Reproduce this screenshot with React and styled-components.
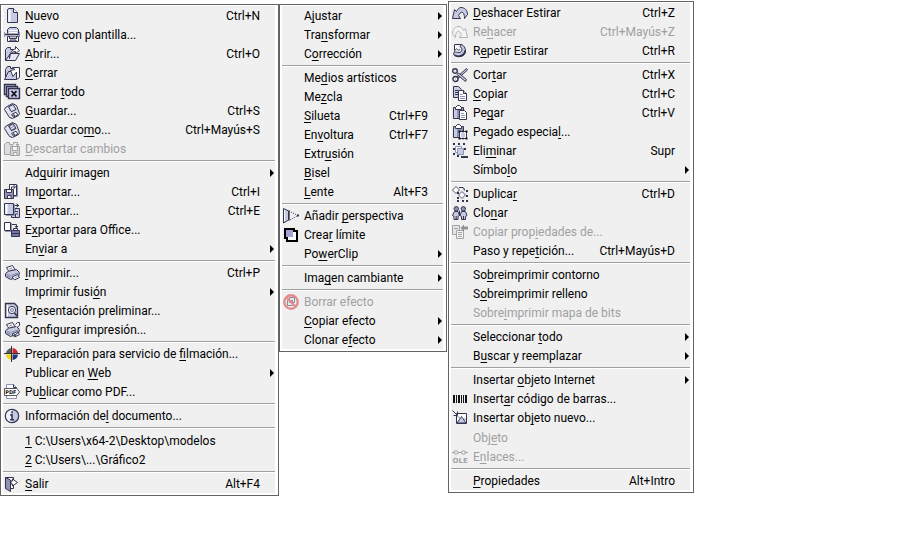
import React from "react";
import styled, { createGlobalStyle } from "styled-components";

const GlobalStyle = createGlobalStyle`
  body {
    margin: 0;
    background: #fff;
  }
`;

const Desk = styled.main`
  display: flex;
  align-items: flex-start;
  padding-top: 1px;
  font-family: Roboto, "Open Sans", sans-serif;
  font-size: 12px;
  color: #000;
`;

const Panel = styled.nav`
  box-sizing: border-box;
  flex: 0 0 auto;
  min-width: ${(p) => p.$min}px;
  margin-top: ${(p) => (p.$raised ? 0 : 3)}px;
  margin-left: ${(p) => (p.$spaced ? 1 : 0)}px;
  border: 1px solid #646464;
  padding: 1px 3px 2px 2px;
  background: #f0f0f0;
  box-shadow: inset 0 0 0 1px #fff, inset 2px 0 0 #fff, inset -3px 0 0 #fff, inset 0 -2px 0 #fff;
`;

const Group = styled.ul`
  list-style: none;
  margin: 0;
  padding: 0;

  & + & {
    margin-top: 2px;
    border-top: 1px solid #a0a0a0;
    box-shadow: inset 0 1px 0 #fff;
    padding-top: 2px;
  }
`;

const Item = styled.button`
  display: grid;
  grid-template-columns: 16px 1fr auto 14px;
  align-items: center;
  width: 100%;
  height: ${(p) => (p.$tall ? 20 : 19)}px;
  padding: ${(p) => (p.$tall ? 1 : 0)}px 1px 0;
  border: 0;
  background: none;
  color: inherit;
  font: inherit;
  line-height: 16px;
  text-align: left;
  white-space: nowrap;

  &:disabled {
    color: #a0a0a0;
  }
`;

const Label = styled.span`
  padding: 1px 0 0 5px;
`;

const Mnemonic = styled.u`
  text-decoration-skip-ink: none;
  text-underline-offset: 2px;
  text-decoration-thickness: 1px;
`;

const Shortcut = styled.kbd`
  font: inherit;
  padding: 1px 0 0 14px;
`;

const Arrow = styled.svg`
  width: 4px;
  height: 8px;
  justify-self: end;
`;

const IconBox = styled.svg`
  display: block;
  width: 16px;
  height: 16px;
  overflow: visible;
  fill: none;
  stroke: #34344e;
  stroke-width: 1;
`;

const IconText = styled.text`
  font-family: "DejaVu Sans", sans-serif;
  font-weight: bold;
  font-size: ${(p) => p.$size}px;
  stroke: none;
  fill: ${(p) => p.$color};
`;

const L = "#c6cae2";
const M = "#8e92b5";
const G = "#a3a3a7";

const Floppy = ({ shutter = L }) => (
  <>
    <path d="M1.5 4.5 8.5.5 12.5 2.5 15.5 10.5 14.5 12.5 8.5 15.5 5.5 14.5.5 6.5z" fill="#dfe1f0" />
    <path d="M4.5 3.8 9 1.5 12 6.5 7.5 8.8z" fill={shutter} />
    <path d="M6.2 5 9.4 3.4M7.2 6.8 10.4 5.2" stroke="#fff" />
    <path d="M7.5 11.5 12 9.2 13.8 12 9.5 14.2z" fill="#fff" />
    <path d="M9.4 11.4l1.2 1.8" strokeWidth="1.4" />
  </>
);

const Printer = () => (
  <>
    <path d="M2.5 2.5 8.5.5 11.5 5.5 5.5 7.5z" fill="#fff" />
    <path d="M5 4 8.2 3M6 5.6 9.2 4.6" stroke={M} />
    <path d="M1.5 8.5 4.5 6.2 12.5 4.5 15.5 7.5 14.5 11.5 6.5 14.5 1.5 11.5z" fill={L} />
    <path d="M1.5 8.5 6.5 10.5 15.5 7.5" stroke={M} />
    <path d="M2.5 9.8v1.5l4 2.2v-2z" fill={M} stroke="none" />
    <path d="M8 12 13.5 9.5 15.5 12.5 10.5 15z" fill="#fff" />
    <path d="M10.6 13 13.4 11.6" stroke={M} />
  </>
);

const Clipboard = () => (
  <>
    <path d="M1.5 2.5H11.5V13.5H1.5z" fill={M} />
    <path d="M2 3h3v10H2z" fill={L} stroke="none" />
    <path d="M3.5 4.5V2.5L5.5.5H7.5L9.5 2.5V4.5z" fill="#fff" />
  </>
);

const icons = {
  new: (
    <>
      <path d="M3.5 1.5 5 .5H9.5L13.5 4.5V14.5H3.5z" fill={L} />
      <path d="M5.5 2v12" stroke="#fff" strokeWidth="2" />
      <path d="M9.5.5V4.5H13.5" fill="#fff" />
    </>
  ),
  template: (
    <>
      <path d="M3.5 6.5V2.5L5.5.5H12.5L14.5 2.5V6.5" fill={L} />
      <path d="M5 3.5H13M5 5.5H13" stroke="#fff" />
      <path d="M0 7.5H16" strokeWidth="1.6" />
      <path d="M.5 5v5M15.5 5v5" stroke={M} />
      <path d="M3.5 9.5H14.5V14.5H3.5z" fill="#fff" />
      <path d="M5.5 9.5V11.5H12.5V9.5M6 14V13H12V14" fill={L} />
    </>
  ),
  open: (
    <>
      <path d="M1.5 14.5V3.5L3.5 1.5H6.5V3.5H10.5V6.5" fill={L} />
      <path d="M1.5 14.5 6.5 7.5H15.5L11.5 14.5z" fill="#e4e6f3" />
      <path d="M5.5 12.5C5.5 8 8 5.5 11.5 5.5V7.5L15.5 4.5 11.5 .5V3C8 3.5 5.5 7 5.5 12.5z" fill="#fff" />
    </>
  ),
  close: (
    <>
      <path d="M1.5 14.5V4.5L3.5 1.5H6.5V3.5H9" fill={L} />
      <path d="M.5 14.5 4.5 6.5H13.5L12.5 14.5z" fill={L} />
      <path d="M8.5 2.5H15.5V12.5L12.5 14.5V7L9 11.5 6.5 5.5 11 4.5z" fill="#fff" />
    </>
  ),
  closeAll: (
    <>
      <path d="M.5 .5H11.5V10.5H.5z" fill={L} strokeWidth="1.4" />
      <path d="M2.5 2.5H13.5V12.5H2.5z" fill={L} strokeWidth="1.4" />
      <path d="M4.5 4.5H15.5V14.5H4.5z" fill={L} strokeWidth="1.4" />
      <path d="M7.5 7 12.5 12.5M12.5 7 7.5 12.5" stroke="#11111f" strokeWidth="1.8" />
    </>
  ),
  save: <Floppy />,
  saveAs: <Floppy shutter={M} />,
  revert: (
    <g stroke={G}>
      <path d="M.5 13.5V3.5L2.5 1.5H5.5V3.5H8.5V13.5z" fill="#dedee0" />
      <path d="M6.5 5.5H15.5V14.5H6.5z" fill="#d4d4d6" />
      <path d="M8.5 6V9.5H13.5V6M9.5 14V11.5H13V14" fill="#f5f5f5" />
      <path d="M9.5 3.5V1.5H13.5V4M12 3l1.5 2L15 3" />
    </g>
  ),
  import: (
    <>
      <path d="M5.5 .5H12.5V11.5H5.5z" fill="#fff" />
      <path d="M13.5 1V12.5H8" stroke={M} />
      <path d="M.5 5.5H9.5V14.5H.5z" fill={M} />
      <path d="M2.5 6V8.5H7.5V6M3.5 14V11.5H7V14" fill="#fff" />
      <path d="M7.5 5V3H11M9.5 1 11.5 3 9.5 5" />
    </>
  ),
  export: (
    <>
      <path d="M7.5 5.5H15.5V14.5H7.5z" fill={L} />
      <path d="M11 6v2.5H14M11.5 14v-3H14" fill="#fff" />
      <path d="M.5 .5H9.5V11.5H.5z" fill={L} />
      <path d="M2.5 1v10" stroke="#fff" strokeWidth="2" />
      <path d="M10.5 1V12.5H2" stroke={M} />
      <path d="M11 2.5H14.5M12.5 .8 14.8 2.5 12.5 4.2" />
    </>
  ),
  office: (
    <>
      <path d="M.5 .5H6.5V8.5H.5z" fill="#fff" />
      <path d="M7.5 1V9.5H1" stroke={M} />
      <path d="M8 2.5H12.5V5M11 4l1.5 1.8L14 4" />
      <path d="M9.5 8V6.5H13.5V8" />
      <path d="M7.5 8.5H15.5V14.5H7.5z" fill="#7479a8" />
      <path d="M8 11.5H15" />
    </>
  ),
  print: <Printer />,
  preview: (
    <>
      <path d="M1.5 .5H10.5L13.5 3.5V14.5H1.5z" fill={L} strokeWidth="1.3" />
      <path d="M3.5 2V13.5" stroke="#fff" />
      <circle cx="8" cy="7" r="3.6" fill="#fff" />
      <circle cx="8" cy="7" r="1.6" fill={L} stroke={M} />
      <path d="M10.5 10 13 13" strokeWidth="1.6" />
    </>
  ),
  printSetup: (
    <>
      <Printer />
      <path d="M11.5 2.5 13.5 .5H15.5V3.5L13 5.5" fill="#fff" />
      <path d="M10 14 14.5 10M9 11l3 3.5" />
    </>
  ),
  separations: (
    <g stroke="none">
      <path d="M7.5 2A5.8 5.8 0 0 0 2 7.5H7.5z" fill="#5b5b66" />
      <path d="M8.5 2A5.8 5.8 0 0 1 14 7.5H8.5z" fill="#d4232c" />
      <path d="M2 8.5A5.8 5.8 0 0 0 7.5 14V8.5z" fill="#f2d51b" />
      <path d="M8.5 14A5.8 5.8 0 0 0 14 8.5H8.5z" fill="#24337d" />
      <path d="M7.5 0V16M0 7.5H16" stroke="#333" strokeWidth="1" />
    </g>
  ),
  pdf: (
    <>
      <path d="M2.5 4V.5H9.5L12.5 3.5V5M2.5 11V14.5H12.5V11" fill="#fff" stroke={M} />
      <path d="M9.5 .5V3.5H12.5" />
      <path d="M.5 4.5H13L15.5 8 13 11.5H.5z" fill="#fff" stroke="#555" />
      <IconText x="1.3" y="10" $size={5} $color="#111">PDF</IconText>
    </>
  ),
  info: (
    <>
      <circle cx="8" cy="8" r="6.7" fill={L} strokeWidth="1.2" />
      <path d="M8 2A6 6 0 0 0 8 14z" fill="#eef0fa" stroke="none" />
      <path d="M8 3.2V5.2M6.3 6.9H8V11.5M6 11.8H10.2" strokeWidth="1.6" />
    </>
  ),
  exit: (
    <>
      <path d="M1.5 1.5H9.5V12.5H1.5z" fill="#fff" />
      <path d="M1.5 1.5 6.5 4V15.5L1.5 12.5z" fill={M} />
      <path d="M8.5 5V3L13.5 6.5 8.5 10V8H7V5z" fill="#fff" />
    </>
  ),
  perspective: (
    <>
      <path d="M.5 .5 5.5 3V12L.5 15z" fill={L} />
      <path d="M1.5 2v11" stroke="#fff" />
      <path d="M6 2.5V12.5" strokeWidth="1.4" />
      <path d="M6 3 15 7.5 6 12.5" strokeDasharray="1 1.3" />
      <path d="M14 7.5h2" strokeWidth="2" />
    </>
  ),
  boundary: (
    <>
      <path d="M2 2H11V4H14V14H4V11H2z" fill="#fff" stroke="#000" strokeWidth="2" />
      <path d="M3 3H10V10H3z" fill="#a6a6d6" stroke="none" />
    </>
  ),
  clearEffect: (
    <>
      <path d="M4.5 6.5H9.5V11.5H4.5zM6.5 3.5H11.5V8.5H6.5z" fill="#e6e6ee" stroke="#88889a" />
      <circle cx="8" cy="8" r="6.7" stroke="#e58b8b" strokeWidth="2.4" />
      <path d="M3.3 3.3 12.7 12.7" stroke="#e58b8b" strokeWidth="2.2" />
    </>
  ),
  undo: (
    <path
      d="M2.5 4.5.5 13.5H8.5L6.5 10.5 8.5 7.5C11 6.5 12.5 8.5 12.5 13.5L15.5 9.5C15.5 5 12.5 2.5 9 2.5 7 2.5 6 4 4.5 6.5z"
      fill={L}
    />
  ),
  redo: (
    <path
      d="M13.5 4.5 15.5 13.5H7.5L9.5 10.5 7.5 7.5C5 6.5 3.5 8.5 3.5 13.5L.5 9.5C.5 5 3.5 2.5 7 2.5 9 2.5 10 4 11.5 6.5z"
      fill="#f5f5f6"
      stroke="#b3b3b6"
    />
  ),
  repeat: (
    <>
      <path d="M2.5 1.5H9.5L8 3.5C11 5 10.5 9.5 7 9.5 5 9.5 4 9 2.5 8.5L1.5 11.5C6 15 13.5 14 13.5 8 13.5 5 12 2.5 9.5 1.5" fill={L} />
      <path d="M2.5 1.5V7.5L4.5 5.8C5.5 7 7 7.5 8 6.5" fill="#fff" />
      <path d="M2.5 12.3C7 14.6 12.8 12.5 13 7.5" strokeWidth="1.8" />
    </>
  ),
  cut: (
    <>
      <path d="M14.5 1.5 5.5 9.5 6.5 11 15.5 3z" fill={L} />
      <path d="M6.5 6 14.5 12.5 13.5 14.5 5 7.5z" fill={L} />
      <circle cx="3" cy="4" r="2.3" fill="#fff" strokeWidth="1.4" />
      <circle cx="3.5" cy="12" r="2.5" fill="#fff" strokeWidth="1.4" />
      <path d="M3 3.5v1M3.5 11.5v1" stroke={M} />
    </>
  ),
  copy: (
    <>
      <path d="M1.5 .5H6.5L9.5 3.5V11.5H1.5z" fill={L} />
      <path d="M3 4.5H6M3 6.5H6M3 8.5H6" />
      <path d="M6.5 4.5H11.5L14.5 7.5V14.5H6.5z" fill="#fff" />
      <path d="M11.5 4.5V7.5H14.5" fill={L} />
      <path d="M8 8.5H10.5M8 10.5H13M8 12.5H13" stroke={M} />
    </>
  ),
  paste: (
    <>
      <Clipboard />
      <path d="M7.5 5.5H12.5L14.5 7.5V14.5H7.5z" fill="#fff" />
      <path d="M9 8.5H12M9 10.5H13M9 12.5H13" stroke={M} />
    </>
  ),
  pasteSpecial: (
    <>
      <Clipboard />
      <path d="M7.5 7.5H14.5V14.5H7.5z" fill="#fff" />
      <path d="M9 9H13V13H9z" fill={L} stroke="none" />
      <path d="M6.5 7.5h2M10.5 7.5h1M13.5 7.5H15.5M6.5 14.5h2M10.5 14.5h1M13.5 14.5H15.5" strokeWidth="2" stroke="#11111f" />
    </>
  ),
  remove: (
    <>
      <path d="M3.5 3.5H9.5V9.5H3.5z" fill="#fff" stroke={M} />
      <path d="M5.5 5.5H11.5V11.5H5.5z" fill={L} stroke={M} />
      <path d="M1 1H3M6 1H8M11 1H13M1 6H3M12 6H14M1 11H3M5 13H7" strokeWidth="2" />
      <path d="M9 14H16" strokeWidth="2" />
    </>
  ),
  duplicate: (
    <>
      <path d="M.5 4 4 .5 7.5 4 4 7.5z" fill="#fff" stroke="#50536f" />
      <path d="M7 1.5H10.5C12 2 12.5 3 12.5 4.5" strokeWidth="1.2" />
      <path d="M6.5 9 10 5.5 13.5 9 10 12.5z" fill="#fff" stroke="#50536f" />
      <path d="M5 7H7M14 5H16M14 10H16M5 12H7M5 15H7M10 15H12M14 15H16" strokeWidth="2" />
    </>
  ),
  clone: (
    <>
      <path d="M2.5 6.5.5 10.5 2 11.5V14.5H6V11.5L7.5 10.5 6 6.5z" fill={L} />
      <path d="M9.5 6.5 8 10.5 9.5 11.5V14.5H13.5V11.5L15 10.5 13.5 6.5z" fill={L} />
      <circle cx="4.3" cy="3.8" r="2.2" fill={M} />
      <circle cx="11.3" cy="3.8" r="2.2" fill={M} />
      <path d="M4.2 11V14M11.5 11V14M7.5 5.5V11" />
    </>
  ),
  copyProps: (
    <g stroke={G}>
      <path d="M.5 1.5H7.5V10.5H.5z" fill="#e4e4e6" />
      <path d="M4.5 6.5H11.5V14.5H4.5z" fill="#f4f4f4" />
      <path d="M2 4.5H6M6 8.5H10M6 10.5H10M6 12.5H10" />
      <path d="M8.5 4 12 .5V2.5H16V5.5H12V7.5z" fill="#929297" stroke="none" />
    </g>
  ),
  barcode: (
    <path d="M1 4h2v8h-2zM4 4h1v8h-1zM6 4h2v8h-2zM9 4h1v8h-1zM11 4h1v8h-1zM13 4h2v8h-2z" fill="#111" stroke="none" />
  ),
  insertObject: (
    <>
      <path d="M4.5 3.5H14.5V13.5H4.5z" fill="#fff" />
      <path d="M5 13 9.5 6.5 14 13z" fill={L} />
      <path d="M5 6.5 14 9.5" stroke={M} />
      <path d="M.5 .5 5 5M5.5 1.5V5.5H1.5" />
    </>
  ),
  ole: (
    <>
      <path d="M0 3.5H3M5.5 3.5H10M12.5 3.5H16" stroke={G} />
      <ellipse cx="4" cy="3.5" rx="2.2" ry="1.7" stroke={G} />
      <ellipse cx="11.5" cy="3.5" rx="2.2" ry="1.7" stroke={G} />
      <IconText x="0.5" y="14" $size={7} $color={G}>OLE</IconText>
    </>
  ),
};

// Each item: label with "_" before its access key, then optional icon, shortcut and flags.
const fileMenu = [
  [
    { t: "_Nuevo", icon: "new", key: "Ctrl+N" },
    { t: "N_uevo con plantilla...", icon: "template" },
    { t: "_Abrir...", icon: "open", key: "Ctrl+O" },
    { t: "_Cerrar", icon: "close" },
    { t: "Cerrar _todo", icon: "closeAll" },
    { t: "_Guardar...", icon: "save", key: "Ctrl+S" },
    { t: "Guardar co_mo...", icon: "saveAs", key: "Ctrl+Mayús+S" },
    { t: "_Descartar cambios", icon: "revert", off: true },
  ],
  [
    { t: "Ad_quirir imagen", sub: true },
    { t: "Im_portar...", icon: "import", key: "Ctrl+I" },
    { t: "_Exportar...", icon: "export", key: "Ctrl+E" },
    { t: "E_xportar para Office...", icon: "office" },
    { t: "En_viar a", sub: true },
  ],
  [
    { t: "_Imprimir...", icon: "print", key: "Ctrl+P" },
    { t: "Imprimir fusi_ón", sub: true },
    { t: "P_resentación preliminar...", icon: "preview" },
    { t: "C_onfigurar impresión...", icon: "printSetup" },
  ],
  [
    { t: "Preparación para servicio de _filmación...", icon: "separations" },
    { t: "Publicar en _Web", sub: true },
    { t: "Pu_blicar como PDF...", icon: "pdf" },
  ],
  [{ t: "Información de_l documento...", icon: "info" }],
  [{ t: "_1 C:\\Users\\x64-2\\Desktop\\modelos", tall: true }, { t: "_2 C:\\Users\\...\\Gráfico2" }],
  [{ t: "_Salir", icon: "exit", key: "Alt+F4" }],
];

const effectsMenu = [
  [
    { t: "A_justar", sub: true },
    { t: "Tra_nsformar", sub: true },
    { t: "C_orrección", sub: true },
  ],
  [
    { t: "Me_dios artísticos" },
    { t: "Me_zcla" },
    { t: "_Silueta", key: "Ctrl+F9" },
    { t: "En_voltura", key: "Ctrl+F7" },
    { t: "Extr_usión" },
    { t: "_Bisel" },
    { t: "_Lente", key: "Alt+F3" },
  ],
  [
    { t: "Añadir _perspectiva", icon: "perspective" },
    { t: "Crea_r límite", icon: "boundary" },
    { t: "Po_werClip", sub: true },
  ],
  [{ t: "Ima_gen cambiante", sub: true }],
  [
    { t: "Borrar efecto", icon: "clearEffect", off: true },
    { t: "_Copiar efecto", sub: true },
    { t: "Clonar e_fecto", sub: true },
  ],
];

const editMenu = [
  [
    { t: "_Deshacer Estirar", icon: "undo", key: "Ctrl+Z" },
    { t: "Re_hacer", icon: "redo", key: "Ctrl+Mayús+Z", off: true },
    { t: "R_epetir Estirar", icon: "repeat", key: "Ctrl+R" },
  ],
  [
    { t: "Cor_tar", icon: "cut", key: "Ctrl+X" },
    { t: "_Copiar", icon: "copy", key: "Ctrl+C" },
    { t: "Pe_gar", icon: "paste", key: "Ctrl+V" },
    { t: "Pegado especia_l...", icon: "pasteSpecial" },
    { t: "Eli_minar", icon: "remove", key: "Supr" },
    { t: "Símbo_lo", sub: true },
  ],
  [
    { t: "Duplica_r", icon: "duplicate", key: "Ctrl+D" },
    { t: "Clo_nar", icon: "clone" },
    { t: "Copiar prop_iedades de...", icon: "copyProps", off: true },
    { t: "Paso y repe_tición...", key: "Ctrl+Mayús+D" },
  ],
  [
    { t: "So_breimprimir contorno" },
    { t: "S_obreimprimir relleno" },
    { t: "Sobre_imprimir mapa de bits", off: true },
  ],
  [
    { t: "Seleccionar _todo", sub: true },
    { t: "B_uscar y reemplazar", sub: true },
  ],
  [
    { t: "Insertar _objeto Internet", sub: true },
    { t: "Insert_ar código de barras...", icon: "barcode" },
    { t: "Insertar ob_jeto nuevo...", icon: "insertObject" },
    { t: "Obj_eto", tall: true, off: true },
    { t: "E_nlaces...", icon: "ole", off: true },
  ],
  [{ t: "_Propiedades", key: "Alt+Intro" }],
];

function LabelText({ text }) {
  const at = text.indexOf("_");
  if (at < 0) return <Label>{text}</Label>;
  return (
    <Label>
      {text.slice(0, at)}
      <Mnemonic>{text[at + 1]}</Mnemonic>
      {text.slice(at + 2)}
    </Label>
  );
}

function Menu({ name, groups, ...look }) {
  return (
    <Panel aria-label={name} {...look}>
      {groups.map((items, g) => (
        <Group key={g}>
          {items.map((it) => (
            <li key={it.t}>
              <Item type="button" disabled={it.off} $tall={it.tall} aria-haspopup={it.sub ? "menu" : undefined}>
                {it.icon ? (
                  <IconBox viewBox="0 0 16 16" aria-hidden="true">
                    {icons[it.icon]}
                  </IconBox>
                ) : (
                  <span />
                )}
                <LabelText text={it.t} />
                {it.key ? <Shortcut>{it.key}</Shortcut> : <span />}
                {it.sub && (
                  <Arrow viewBox="0 0 4 8" aria-hidden="true">
                    <path d="M0 0 4 4 0 8z" />
                  </Arrow>
                )}
              </Item>
            </li>
          ))}
        </Group>
      ))}
    </Panel>
  );
}

export default function App() {
  return (
    <>
      <GlobalStyle />
      <Desk>
        <Menu name="Archivo" groups={fileMenu} $min={279} />
        <Menu name="Efectos" groups={effectsMenu} $min={168} />
        <Menu name="Edición" groups={editMenu} $min={246} $raised $spaced />
      </Desk>
    </>
  );
}
